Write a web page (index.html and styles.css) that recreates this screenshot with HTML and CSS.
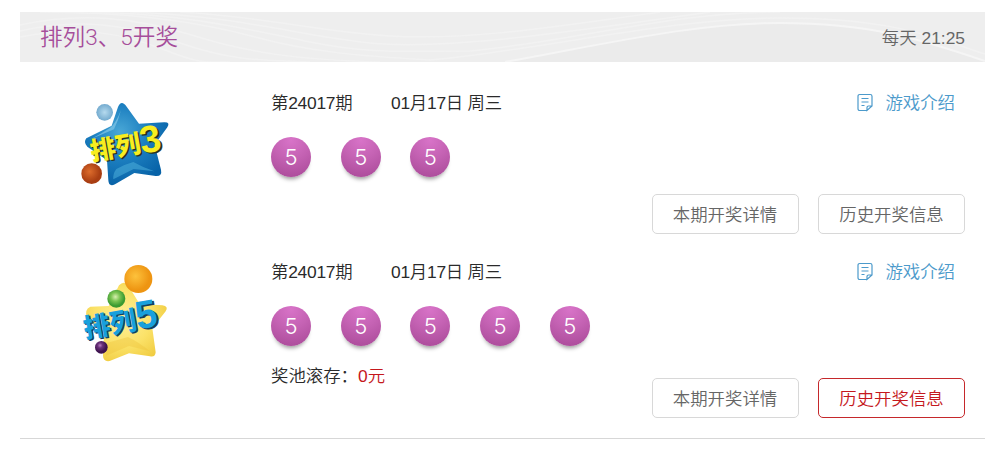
FILE: index.html
```html
<!DOCTYPE html>
<html lang="zh-CN">
<head>
<meta charset="utf-8">
<title>排列3、5开奖</title>
<link rel="stylesheet" href="styles.css">
</head>
<body>
<svg class="defs" width="0" height="0" aria-hidden="true">
  <symbol id="note" viewBox="0 0 18 20">
    <path d="M11 17.500H3.800Q2 17.500 2 15.700V3.300Q2 1.500 3.800 1.500H14.200Q16 1.500 16 3.300V13L11 17.500V14.500Q11 13 12.500 13H16M5.500 5.500H12.500M5.500 9H12.500M5.500 12.500H8.500" fill="none" stroke="currentColor" stroke-width="1.200"/>
  </symbol>
</svg>
<main class="panel">
  <header class="head">
    <svg class="waves" viewBox="0 0 965 50" preserveAspectRatio="none" aria-hidden="true">
      <path class="shade" d="M485 50C590 31 675 11 760 11C850 11 900 27 965 49V50Z"/>
      <g class="lines">
        <path d="M0 13C60 0 115 5 175 24S290 48 360 50"/>
        <path d="M0 19C60 6 105 12 160 31S245 48 290 50"/>
        <path d="M0 25C60 14 100 20 145 38S190 48 210 50"/>
        <path d="M20 0C110 0 180 10 235 25S340 44 410 48C520 38 650 6 760 6S910 24 965 42"/>
        <path d="M70 0C170 2 230 18 290 30S380 39 450 39C550 30 650 0 760 0"/>
        <path d="M110 0C220 4 280 24 350 31S530 23 690 0"/>
        <path d="M160 0C240 4 300 20 370 24S510 19 640 0"/>
        <path class="bright" d="M485 50C590 31 675 11 760 11C850 11 900 27 965 49"/>
      </g>
    </svg>
    <h1 class="title">排列3、5开奖</h1>
    <span class="time">每天 21:25</span>
  </header>

  <section class="row row-three">
    <svg class="logo" width="110" height="105" viewBox="0 0 330 315">
      <defs>
        <radialGradient id="star3" cx=".42" cy=".35" r=".65"><stop offset="0" stop-color="#49a7d6"/><stop offset=".5" stop-color="#1c7fc0"/><stop offset="1" stop-color="#0863a8"/></radialGradient>
        <radialGradient id="sky"><stop offset="0" stop-color="#b5daee"/><stop offset="1" stop-color="#74abcf"/></radialGradient>
        <radialGradient id="rust" cx=".4" cy=".4"><stop offset="0" stop-color="#dd6c2c"/><stop offset="1" stop-color="#a93e12"/></radialGradient>
      </defs>
      <path d="M144 51Q154 28 170 50L207 101L282 97Q302 96 292 112L254 164L273 239Q277 260 257 258L193 249L135 283Q116 292 115 271L111 211L52 170Q39 157 49 145L125 107Z" fill="url(#star3)"/>
      <path d="M153 60Q145 92 132 118L62 148Q94 130 121 113Q139 98 153 60Z" fill="#78c1e4" opacity=".8"/>
      <path d="M139 237Q128 252 130 268L191 237L253 244Q218 232 190 216Q161 224 139 237Z" fill="#4daedb" opacity=".55"/>
      <circle cx="104" cy="67" r="25" fill="url(#sky)"/>
      <circle cx="65" cy="251" r="31" fill="url(#rust)"/>
      <g class="logo-text" transform="rotate(-10 68 210)">
        <g class="logo-shadow"><text x="70" y="216" font-size="76">排列</text><text x="222" y="222" font-size="114">3</text></g>
        <g fill="#f8ed21"><text x="66" y="212" font-size="76">排列</text><text x="217" y="217" font-size="114">3</text></g>
      </g>
    </svg>
    <div class="result">
      <p class="issue"><span class="number">第24017期</span><span>01月17日 周三</span></p>
      <div class="balls"><b class="ball">5</b><b class="ball">5</b><b class="ball">5</b></div>
    </div>
    <div class="side">
      <a class="intro"><svg class="note" width="18" height="20"><use href="#note"/></svg>游戏介绍</a>
      <div class="actions"><button class="button">本期开奖详情</button><button class="button">历史开奖信息</button></div>
    </div>
  </section>

  <section class="row row-five">
    <svg class="logo" width="110" height="115" viewBox="0 0 330 345">
      <defs>
        <radialGradient id="star5" cx=".45" cy=".45" r=".65"><stop offset="0" stop-color="#fff09a"/><stop offset=".55" stop-color="#fbe268"/><stop offset="1" stop-color="#efc93c"/></radialGradient>
        <radialGradient id="orange" cx=".4" cy=".4"><stop offset="0" stop-color="#fdc23c"/><stop offset="1" stop-color="#ee9512"/></radialGradient>
        <radialGradient id="green" cx=".45" cy=".4"><stop offset="0" stop-color="#d8f0b0"/><stop offset=".5" stop-color="#7ac351"/><stop offset="1" stop-color="#3b9a31"/></radialGradient>
        <radialGradient id="plum" cx=".4" cy=".35"><stop offset="0" stop-color="#b77ac1"/><stop offset=".4" stop-color="#69327a"/><stop offset="1" stop-color="#3d124e"/></radialGradient>
      </defs>
      <path d="M147 91Q162 76 174 91L209 147L277 151Q297 154 287 169L247 220L257 292Q256 307 240 304L177 295L119 318Q100 321 99 303L102 240L51 190Q42 163 61 155L116 153Z" fill="url(#star5)"/>
      <path d="M113 263L108 302L177 273L240 289Q204 260 174 246Z" fill="#eec23c" opacity=".4"/>
      <circle cx="205" cy="72" r="42" fill="url(#orange)"/>
      <circle cx="139" cy="131" r="27" fill="url(#green)"/>
      <circle cx="94" cy="277" r="19" fill="url(#plum)"/>
      <g class="logo-text" transform="rotate(-10 45 250)">
        <g class="logo-shadow five"><text x="50" y="254" font-size="80">排列</text><text x="210" y="256" font-size="118">5</text></g>
        <g fill="#18a0dc"><text x="46" y="250" font-size="80">排列</text><text x="205" y="251" font-size="118">5</text></g>
      </g>
    </svg>
    <div class="result">
      <p class="issue"><span class="number">第24017期</span><span>01月17日 周三</span></p>
      <div class="balls"><b class="ball">5</b><b class="ball">5</b><b class="ball">5</b><b class="ball">5</b><b class="ball">5</b></div>
      <p class="pool">奖池滚存：<span class="amount">0元</span></p>
    </div>
    <div class="side">
      <a class="intro"><svg class="note" width="18" height="20"><use href="#note"/></svg>游戏介绍</a>
      <div class="actions"><button class="button">本期开奖详情</button><button class="button active">历史开奖信息</button></div>
    </div>
  </section>
</main>
</body>
</html>
```
FILE: styles.css
```css
* { box-sizing: border-box; }
body {
  margin: 0;
  background: #fff;
  color: #2a2a2a;
  font: 350 17.4px/24px "Liberation Sans", "Noto Sans CJK SC", sans-serif;
}
h1, p { margin: 0; font-weight: inherit; }
.defs { display: block; height: 0; }
.panel {
  width: 965px;
  height: 427px;
  margin: 12px 0 0 20px;
  border-bottom: 1px solid #d7d7d7;
}
.head {
  display: grid;
  grid-template-columns: 1fr auto;
  align-items: center;
  height: 50px;
  padding: 0 20px;
  background: #eeeeee;
}
.waves {
  grid-area: 1 / 1 / 2 / 3;
  width: 965px;
  height: 50px;
  margin: 0 -20px;
}
.shade { fill: #ebebeb; }
.lines { fill: none; stroke: #f2f2f2; stroke-width: 1.5; }
.bright { stroke: #f5f5f5; stroke-width: 2; }
.title {
  grid-area: 1 / 1;
  color: #a64e9b;
  font-family: Roboto, "Noto Sans CJK SC", sans-serif;
  font-size: 22.6px;
  line-height: 30px;
  padding-top: 2px;
}
.time { grid-area: 1 / 2; color: #666; padding-top: 2px; white-space: nowrap; }
.row { display: flex; }
.row-three { height: 172px; padding-top: 28px; }
.row-five { height: 184px; padding-top: 25px; }
.logo { flex: none; margin-left: 50px; }
.row-five .logo { margin-top: -4px; }
.logo-text { font-family: "Liberation Sans", "Noto Sans CJK SC", sans-serif; font-weight: 900; }
.logo-shadow { fill: #28331b; }
.five { fill: #143d63; }
.result { flex: 1; margin-left: 91px; }
.issue { display: flex; padding-top: 1px; letter-spacing: -.25px; }
.number { width: 120px; }
.balls { display: flex; gap: 29.7px; margin-top: 22px; }
.ball {
  width: 40px;
  height: 40px;
  border-radius: 50%;
  background: radial-gradient(circle at 50% 8%, #d873c8 0, #c462b3 45%, #af4f9e 85%, #a54b95 100%);
  box-shadow: 0 5px 4px -3px rgba(0, 0, 0, .4);
  color: #fff;
  font-family: Inter, sans-serif;
  font-size: 22px;
  font-weight: 300;
  line-height: 40px;
  text-align: center;
}
.pool { margin-top: 18px; }
.amount { color: #c5181d; }
.side {
  display: flex;
  flex-direction: column;
  justify-content: space-between;
  align-items: flex-end;
  padding-right: 20px;
}
.intro { display: flex; align-items: center; gap: 11px; margin-right: 10px; padding-top: 1px; color: #4c9acb; }
.actions { display: flex; gap: 19.5px; }
.button {
  width: 147px;
  height: 40px;
  padding: 1px 0 0;
  border: 1px solid #d8d8d8;
  border-radius: 5px;
  background: #fff;
  color: #666;
  font: inherit;
}
.button.active { border-color: #c5282b; color: #c5181d; }
```
